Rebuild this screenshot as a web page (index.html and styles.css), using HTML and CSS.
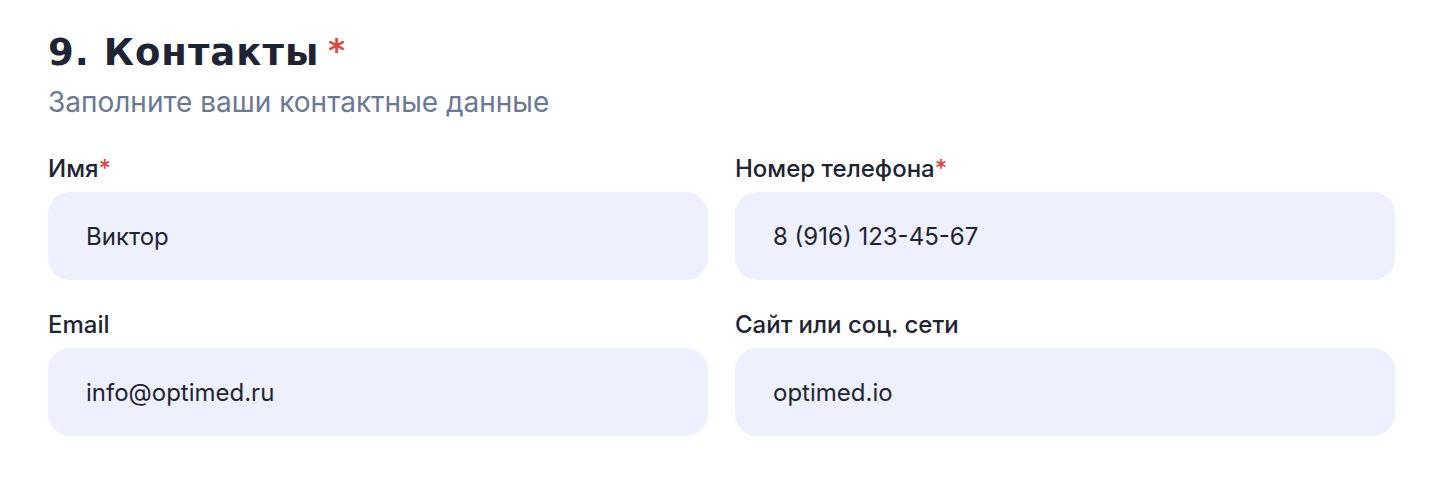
FILE: index.html
```html
<!DOCTYPE html>
<html lang="ru">
<head>
<meta charset="utf-8">
<link rel="stylesheet" href="styles.css">
</head>
<body>
<section class="contacts">
  <h2 class="title">9. Контакты<span class="req-big">*</span></h2>
  <p class="subtitle">Заполните ваши контактные данные</p>
  <div class="grid">
    <label class="field">
      <span class="label">Имя<span class="req">*</span></span>
      <span class="input">Виктор</span>
    </label>
    <label class="field">
      <span class="label">Номер телефона<span class="req">*</span></span>
      <span class="input">8 (916) 123-45-67</span>
    </label>
    <label class="field">
      <span class="label">Email</span>
      <span class="input">info@optimed.ru</span>
    </label>
    <label class="field">
      <span class="label">Сайт или соц. сети</span>
      <span class="input">optimed.io</span>
    </label>
  </div>
</section>
</body>
</html>
```
FILE: styles.css
```css
* { box-sizing: border-box; }
body {
  margin: 0;
  background: #ffffff;
  font-family: Inter, "Noto Sans", sans-serif;
  color: #1e2433;
}
.contacts {
  padding: 29px 48px 0 48px;
}
.title {
  margin: 0;
  font-family: "DejaVu Sans", Inter, sans-serif;
  font-size: 37px;
  font-weight: 700;
  line-height: 48px;
  letter-spacing: 1px;
  color: #1e2433;
}
.req-big {
  margin-left: 9px;
  color: #e0473f;
  font-weight: 700;
  font-size: 32px;
  line-height: 0;
  vertical-align: 4px;
}
.subtitle {
  margin: 8px 0 0 0;
  font-size: 28px;
  line-height: 34px;
  color: #6b7893;
}
.grid {
  display: grid;
  grid-template-columns: 1fr 1fr;
  column-gap: 27px;
  row-gap: 31px;
  margin-top: 36px;
}
.field {
  display: flex;
  flex-direction: column;
  gap: 9px;
}
.label {
  font-size: 24px;
  line-height: 28px;
  font-weight: 500;
  color: #1e2433;
}
.req {
  color: #e0473f;
}
.input {
  display: flex;
  align-items: center;
  height: 88px;
  padding: 0 38px;
  border-radius: 22px;
  background: #eef0fd;
  font-size: 24px;
  color: #1e2433;
}
```
